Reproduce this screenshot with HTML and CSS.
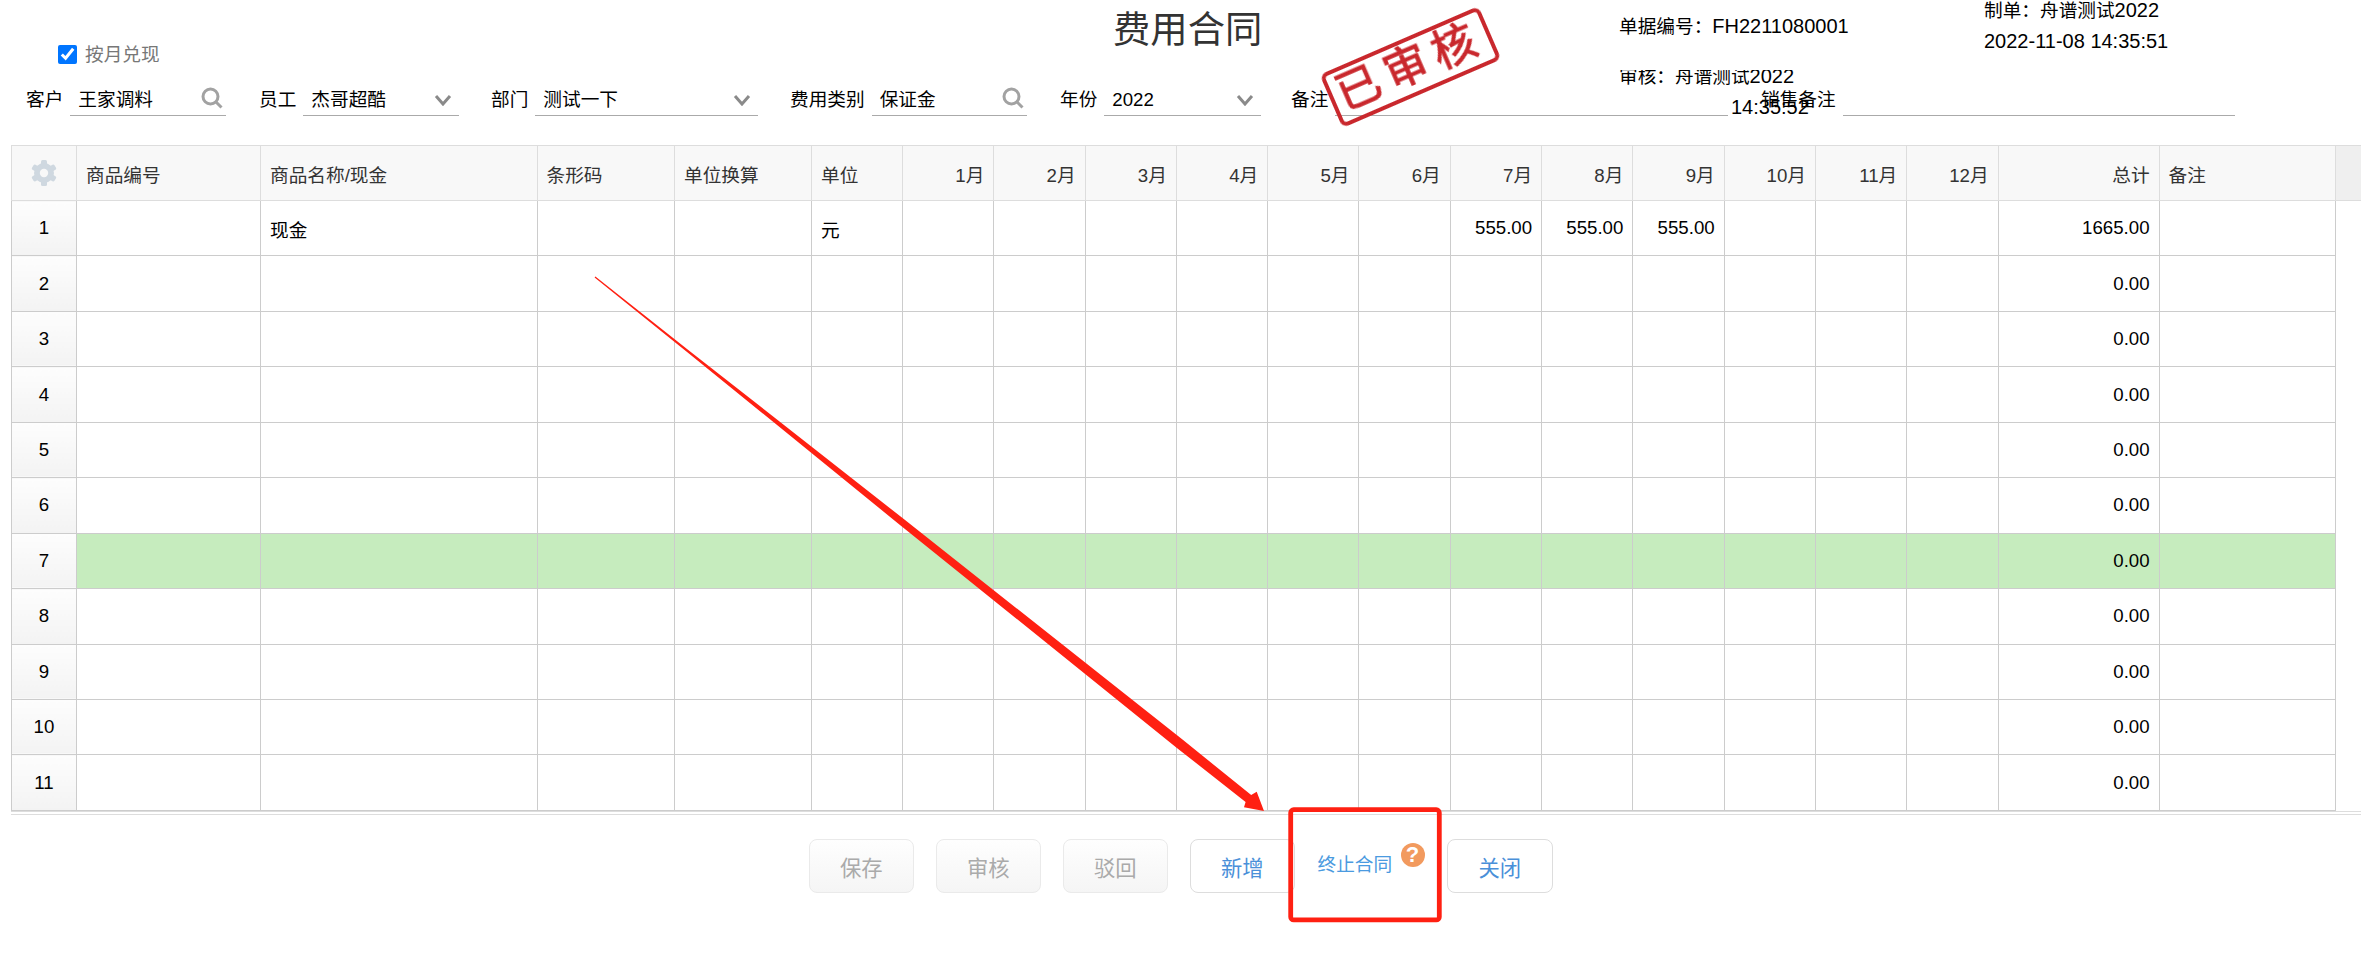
FILE: index.html
```html
<!DOCTYPE html>
<html lang="zh-CN">
<head>
    <meta charset="UTF-8">
    <title>费用合同</title>
    <link rel="stylesheet" href="styles.css">
</head>
<body>
    <div class="page">
        <div class="top-row">
            <label class="month-check"><input type="checkbox" checked><span>按月兑现</span></label>
            <h1 class="title">费用合同</h1>
            <div class="meta meta-left">
                <p>单据编号：<span class="latin">FH2211080001</span></p>
                <p class="audit">审核：舟谱测试<span class="latin">2022</span></p>
                <p class="audit-time latin">14:35:52</p>
            </div>
            <div class="meta meta-right">
                <p>制单：舟谱测试<span class="latin">2022</span></p>
                <p class="latin">2022-11-08 14:35:51</p>
            </div>
        </div>

        <div class="filter-row">
            <div class="field f-customer">
                <span class="field-label">客户</span>
                <div class="control"><span>王家调料</span>
                    <svg class="icon-search" viewBox="0 0 22 22"><circle cx="9.5" cy="9.5" r="7.5"/><path d="M15 15l5.5 5.5"/></svg>
                </div>
            </div>
            <div class="field f-staff">
                <span class="field-label">员工</span>
                <div class="control"><span>杰哥超酷</span>
                    <svg class="icon-chevron" viewBox="0 0 18 12"><path d="M2 2l7 8 7-8"/></svg>
                </div>
            </div>
            <div class="field f-dept">
                <span class="field-label">部门</span>
                <div class="control"><span>测试一下</span>
                    <svg class="icon-chevron" viewBox="0 0 18 12"><path d="M2 2l7 8 7-8"/></svg>
                </div>
            </div>
            <div class="field f-type">
                <span class="field-label">费用类别</span>
                <div class="control"><span>保证金</span>
                    <svg class="icon-search" viewBox="0 0 22 22"><circle cx="9.5" cy="9.5" r="7.5"/><path d="M15 15l5.5 5.5"/></svg>
                </div>
            </div>
            <div class="field f-year">
                <span class="field-label">年份</span>
                <div class="control"><span>2022</span>
                    <svg class="icon-chevron" viewBox="0 0 18 12"><path d="M2 2l7 8 7-8"/></svg>
                </div>
            </div>
            <div class="field f-note">
                <span class="field-label">备注</span>
                <div class="control"></div>
            </div>
            <div class="field f-sales">
                <span class="field-label">销售备注</span>
                <div class="control"></div>
            </div>
        </div>

        <div class="stamp">已审核</div>

        <table class="grid">
            <colgroup>
                <col class="c-no"><col class="c-code"><col class="c-name"><col class="c-bar"><col class="c-conv"><col class="c-unit">
                <col class="c-m"><col class="c-m"><col class="c-m"><col class="c-m"><col class="c-m"><col class="c-m">
                <col class="c-m"><col class="c-m"><col class="c-m"><col class="c-m"><col class="c-m"><col class="c-m">
                <col class="c-total"><col class="c-note"><col class="c-fill">
            </colgroup>
            <thead>
                <tr>
                    <th class="no">
                        <svg class="icon-gear" viewBox="0 0 26 26">
                            <g fill="#cfd8e0">
                                <rect x="10" y="0" width="6" height="26" rx="1.5"/>
                                <rect x="10" y="0" width="6" height="26" rx="1.5" transform="rotate(60 13 13)"/>
                                <rect x="10" y="0" width="6" height="26" rx="1.5" transform="rotate(120 13 13)"/>
                                <circle cx="13" cy="13" r="10"/>
                            </g>
                            <circle cx="13" cy="13" r="4.2" fill="#f8f8f8"/>
                        </svg>
                    </th>
                    <th>商品编号</th><th>商品名称/现金</th><th>条形码</th><th>单位换算</th><th>单位</th>
                    <th class="num">1月</th><th class="num">2月</th><th class="num">3月</th><th class="num">4月</th><th class="num">5月</th><th class="num">6月</th>
                    <th class="num">7月</th><th class="num">8月</th><th class="num">9月</th><th class="num">10月</th><th class="num">11月</th><th class="num">12月</th>
                    <th class="num">总计</th><th>备注</th><th class="fill"></th>
                </tr>
            </thead>
            <tbody>
                <tr><td class="no">1</td><td></td><td>现金</td><td></td><td></td><td>元</td><td></td><td></td><td></td><td></td><td></td><td></td><td class="num">555.00</td><td class="num">555.00</td><td class="num">555.00</td><td></td><td></td><td></td><td class="num">1665.00</td><td></td><td class="fill"></td></tr>
                <tr><td class="no">2</td><td></td><td></td><td></td><td></td><td></td><td></td><td></td><td></td><td></td><td></td><td></td><td></td><td></td><td></td><td></td><td></td><td></td><td class="num">0.00</td><td></td><td class="fill"></td></tr>
                <tr><td class="no">3</td><td></td><td></td><td></td><td></td><td></td><td></td><td></td><td></td><td></td><td></td><td></td><td></td><td></td><td></td><td></td><td></td><td></td><td class="num">0.00</td><td></td><td class="fill"></td></tr>
                <tr><td class="no">4</td><td></td><td></td><td></td><td></td><td></td><td></td><td></td><td></td><td></td><td></td><td></td><td></td><td></td><td></td><td></td><td></td><td></td><td class="num">0.00</td><td></td><td class="fill"></td></tr>
                <tr><td class="no">5</td><td></td><td></td><td></td><td></td><td></td><td></td><td></td><td></td><td></td><td></td><td></td><td></td><td></td><td></td><td></td><td></td><td></td><td class="num">0.00</td><td></td><td class="fill"></td></tr>
                <tr><td class="no">6</td><td></td><td></td><td></td><td></td><td></td><td></td><td></td><td></td><td></td><td></td><td></td><td></td><td></td><td></td><td></td><td></td><td></td><td class="num">0.00</td><td></td><td class="fill"></td></tr>
                <tr class="row-active"><td class="no">7</td><td></td><td></td><td></td><td></td><td></td><td></td><td></td><td></td><td></td><td></td><td></td><td></td><td></td><td></td><td></td><td></td><td></td><td class="num">0.00</td><td></td><td class="fill"></td></tr>
                <tr><td class="no">8</td><td></td><td></td><td></td><td></td><td></td><td></td><td></td><td></td><td></td><td></td><td></td><td></td><td></td><td></td><td></td><td></td><td></td><td class="num">0.00</td><td></td><td class="fill"></td></tr>
                <tr><td class="no">9</td><td></td><td></td><td></td><td></td><td></td><td></td><td></td><td></td><td></td><td></td><td></td><td></td><td></td><td></td><td></td><td></td><td></td><td class="num">0.00</td><td></td><td class="fill"></td></tr>
                <tr><td class="no">10</td><td></td><td></td><td></td><td></td><td></td><td></td><td></td><td></td><td></td><td></td><td></td><td></td><td></td><td></td><td></td><td></td><td></td><td class="num">0.00</td><td></td><td class="fill"></td></tr>
                <tr><td class="no">11</td><td></td><td></td><td></td><td></td><td></td><td></td><td></td><td></td><td></td><td></td><td></td><td></td><td></td><td></td><td></td><td></td><td></td><td class="num">0.00</td><td></td><td class="fill"></td></tr>
            </tbody>
        </table>
        <div class="grid-foot"></div>

        <div class="actions">
            <button class="btn" disabled>保存</button>
            <button class="btn" disabled>审核</button>
            <button class="btn" disabled>驳回</button>
            <button class="btn">新增</button>
            <div class="stop-link">
                <a>终止合同</a>
                <span class="help">?</span>
            </div>
            <button class="btn">关闭</button>
        </div>

        <!-- red marks drawn on top of the screenshot -->
        <svg class="marks" viewBox="0 0 2361 967">
            <polygon fill="#ff2012" points="595.4,276.6 690.8,351.9 902.2,517.8 1183.1,740.1 1251.2,795 1256.7,791.7 1264,811 1244,807.3 1245.6,802 1176.9,747.9 897.8,523.2 689.2,353.7 594.6,277.6"/>
            <rect x="1290.7" y="809.7" width="148.6" height="110.2" rx="3" fill="none" stroke="#ff2012" stroke-width="4.8"/>
        </svg>
    </div>
</body>
</html>
```

FILE: styles.css
```css
body {
    margin: 0;
    background: #fff;
    color: #000;
    font-family: "Liberation Sans", "Noto Sans CJK SC", sans-serif;
    font-size: 18.67px;
}
.page {
    position: relative;
    width: 2361px;
    height: 967px;
    overflow: hidden;
}

/* top */
.top-row {
    display: grid;
    grid-template-columns: 1113px 506px 365px 1fr;
    height: 85px;
}
.month-check {
    display: flex;
    align-items: center;
    gap: 8px;
    height: 19px;
    margin-top: 45px;
    padding-left: 58px;
    color: #777;
}
.month-check input {
    width: 19px;
    height: 19px;
    margin: 0;
}
.month-check span {
    margin-top: -5px;
}
.title {
    margin: 0;
    font-size: 37.33px;
    font-weight: 400;
    line-height: 60px;
    color: #333;
    white-space: nowrap;
}
.meta p {
    margin: 0;
    line-height: 31px;
    white-space: nowrap;
}
.meta .latin {
    font-size: 20px;
}
.meta-left {
    padding-top: 11px;
}
.meta-right {
    margin-top: -5px;
}
.meta .audit {
    margin-top: 19px;
    clip-path: inset(9px 0 0 0);
}
.meta .audit-time {
    margin-left: 112px;
}

/* filters */
.filter-row {
    display: flex;
    padding-left: 26px;
}
.field {
    display: flex;
    gap: 7px;
    height: 31px;
    line-height: 30px;
}
.f-customer { width: 200px; margin-right: 33px; }
.f-staff { width: 200px; margin-right: 32px; }
.f-dept { width: 267px; margin-right: 32px; }
.f-type { width: 237px; margin-right: 33px; }
.f-year { width: 201px; margin-right: 30px; }
.f-note { width: 437px; margin-right: 33px; }
.f-sales { width: 474px; }
.field-label {
    white-space: nowrap;
}
.control {
    flex: 1;
    display: flex;
    justify-content: space-between;
    align-items: center;
    padding: 0 3px 0 8px;
    border-bottom: 1px solid #aaa;
    line-height: 28px;
}
.icon-search {
    width: 22px;
    height: 22px;
    margin-bottom: 4px;
    fill: none;
    stroke: #a2a2a2;
    stroke-width: 3;
}
.icon-chevron {
    width: 18px;
    height: 12px;
    margin-right: 4px;
    fill: none;
    stroke: #8a8a8a;
    stroke-width: 3;
}
.stamp {
    position: absolute;
    left: 1324px;
    top: 38px;
    width: 173px;
    height: 58px;
    box-sizing: border-box;
    border: 4px solid #c9282d;
    border-radius: 7px;
    color: #c9282d;
    font-size: 44px;
    font-weight: 400;
    line-height: 48px;
    letter-spacing: 8px;
    text-align: center;
    white-space: nowrap;
    -webkit-text-stroke: 1px #c9282d;
    transform: rotate(-23.4deg);
    filter: blur(0.4px);
}

/* table */
.grid {
    width: 2350px;
    margin: 29px 0 0 11px;
    border-collapse: collapse;
    table-layout: fixed;
}
.c-no { width: 65px; }
.c-code { width: 184px; }
.c-name { width: 276.5px; }
.c-bar { width: 137.5px; }
.c-conv { width: 137px; }
.c-unit { width: 91px; }
.c-m { width: 91.3px; }
.c-total { width: 161px; }
.c-note { width: 176px; }
.c-fill { width: 26px; }
.grid th,
.grid td {
    height: 55.45px;
    box-sizing: border-box;
    padding: 0 9px;
    border: 1px solid #ccc;
    font-weight: 400;
    text-align: left;
    white-space: nowrap;
}
.grid th {
    height: 55px;
    border-color: #ddd;
    background: #f8f8f8;
    color: #333;
}
.grid .num {
    text-align: right;
}
.grid .no {
    padding: 0;
    text-align: center;
}
.grid td.no {
    background: linear-gradient(#fdfdfd, #f3f3f3);
}
.grid .fill {
    border-width: 0 0 0 1px;
    border-left-color: #ccc;
}
.grid th.fill {
    border-top: 1px solid #ddd;
    border-bottom: 1px solid #ddd;
    background: #efefef;
}
.row-active td {
    background: #c6ecbe;
}
.row-active td.fill {
    background: none;
}
.icon-gear {
    display: block;
    width: 26px;
    height: 26px;
    margin: 0 auto;
}
.grid-foot {
    height: 2px;
    margin-left: 11px;
    border-top: 1px solid #ddd;
    border-bottom: 1px solid #ddd;
}

/* buttons */
.actions {
    display: flex;
    gap: 21.5px;
    padding: 24px 0 0 808.5px;
}
.btn {
    width: 105.5px;
    height: 54px;
    border: 1px solid #ddd;
    border-radius: 8px;
    background: #fff;
    color: #4a90d9;
    font-family: inherit;
    font-size: 21.33px;
    padding: 2px 0 0;
}
.btn:disabled {
    border-color: #eaeaea;
    background: linear-gradient(#fefefe, #f5f5f5);
    color: #aaa;
}
.stop-link {
    position: relative;
    width: 109px;
    color: #4a9ae0;
    line-height: 52px;
    padding-left: 1px;
    box-sizing: border-box;
}
.help {
    position: absolute;
    left: 84px;
    top: 4px;
    width: 24px;
    height: 24px;
    border-radius: 50%;
    background: #f29a5e;
    color: #fff;
    font-size: 22px;
    font-weight: 700;
    line-height: 24px;
    text-align: center;
}
.marks {
    position: absolute;
    left: 0;
    top: 0;
    width: 2361px;
    height: 967px;
    pointer-events: none;
}
```
